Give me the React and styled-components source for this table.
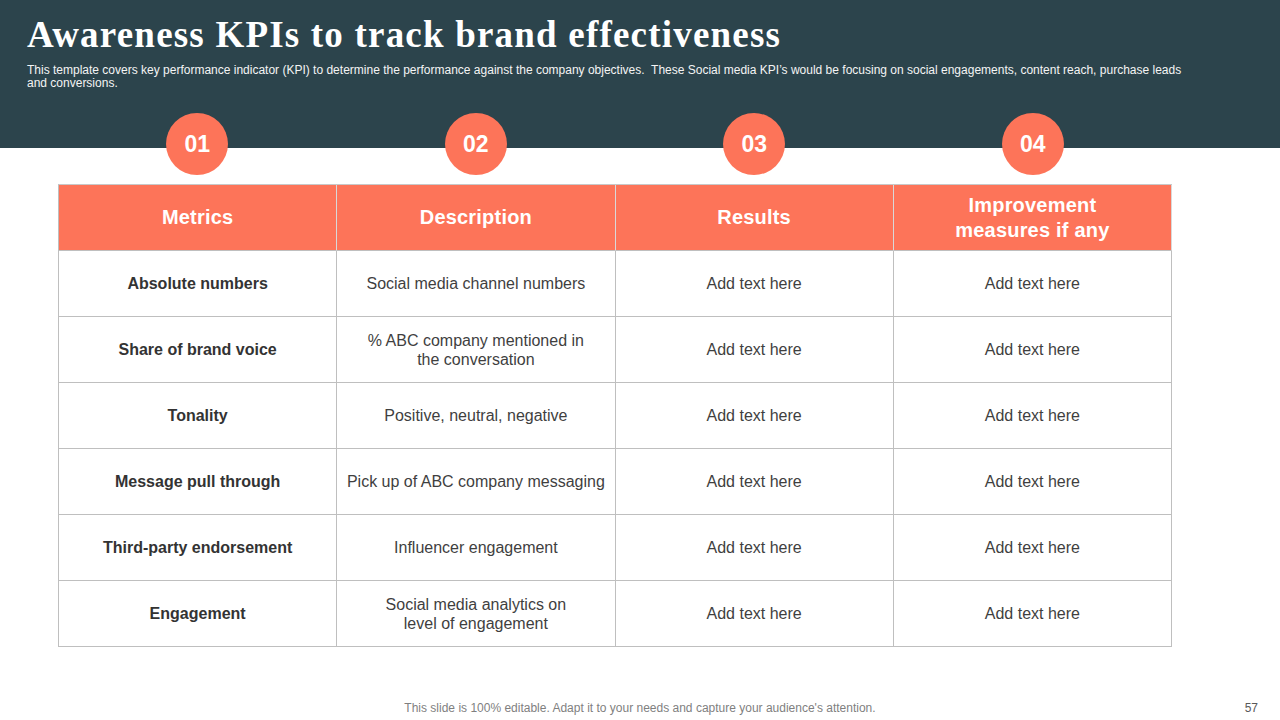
import React from "react";
import styled, { createGlobalStyle } from "styled-components";

const Global = createGlobalStyle`
  html, body { margin: 0; padding: 0; background: #ffffff; }
  * { box-sizing: border-box; }
`;

const Page = styled.div`
  width: 1280px;
  height: 720px;
  overflow: hidden;
  display: flex;
  flex-direction: column;
  background: #ffffff;
  font-family: "Liberation Sans", Arial, sans-serif;
`;

const Header = styled.header`
  height: 148px;
  background: #2c444c;
  padding: 14px 0 0 27px;
  flex-shrink: 0;
`;

const Title = styled.h1`
  margin: 0;
  font-family: "Liberation Serif", "Times New Roman", serif;
  font-weight: 700;
  font-size: 37px;
  line-height: 42px;
  color: #ffffff;
  letter-spacing: 1.2px;
`;

const Subtitle = styled.p`
  margin: 8px 0 0;
  max-width: 1168px;
  font-size: 12px;
  line-height: 13px;
  color: #f4f4f4;
`;

const Main = styled.main`
  margin: -35px 0 0 58px;
  width: 1114px;
  display: flex;
  flex-direction: column;
  gap: 9px;
`;

const BadgeRow = styled.div`
  display: grid;
  grid-template-columns: repeat(4, 1fr);
  justify-items: center;
  position: relative;
`;

const Badge = styled.div`
  width: 62px;
  height: 62px;
  border-radius: 50%;
  background: #fd7459;
  color: #ffffff;
  font-weight: 700;
  font-size: 23px;
  display: flex;
  align-items: center;
  justify-content: center;
`;

const Table = styled.div`
  display: grid;
  grid-template-columns: repeat(4, 1fr);
  border-top: 1px solid #c8c8c8;
  border-left: 1px solid #bfbfbf;
`;

const HeadCell = styled.div`
  height: 66px;
  background: #fd7459;
  color: #ffffff;
  font-weight: 700;
  font-size: 20px;
  line-height: 25px;
  letter-spacing: 0.2px;
  display: flex;
  align-items: center;
  justify-content: center;
  text-align: center;
  border-right: 1px solid #d9d9d9;
  border-bottom: 1px solid #bfbfbf;
`;

const Cell = styled.div`
  height: 66px;
  display: flex;
  align-items: center;
  justify-content: center;
  text-align: center;
  padding: 0 8px;
  font-size: 16px;
  line-height: 19px;
  font-weight: ${(p) => (p.$bold ? 700 : 400)};
  color: ${(p) => (p.$bold ? "#333333" : "#3f3f3f")};
  border-right: 1px solid #bfbfbf;
  border-bottom: 1px solid #bfbfbf;
`;

const Footer = styled.footer`
  margin-top: auto;
  height: 24px;
  display: grid;
  grid-template-columns: 1fr auto 1fr;
  align-items: center;
  font-size: 12px;
  color: #7f7f7f;
`;

const FooterText = styled.span`
  grid-column: 2;
`;

const PageNum = styled.span`
  grid-column: 3;
  justify-self: end;
  padding-right: 22px;
  font-size: 12px;
  color: #595959;
`;

const headers = ["Metrics", "Description", "Results", <>Improvement<br />measures if any</>];

const rows = [
  ["Absolute numbers", "Social media channel numbers"],
  ["Share of brand voice", <>% ABC company mentioned in<br />the conversation</>],
  ["Tonality", "Positive, neutral, negative"],
  ["Message pull through", "Pick up of ABC company messaging"],
  ["Third-party endorsement", "Influencer  engagement"],
  ["Engagement", <>Social media analytics on<br />level of engagement</>],
];

export default function App() {
  return (
    <>
      <Global />
      <Page>
        <Header>
          <Title>Awareness KPIs to track brand effectiveness</Title>
          <Subtitle>
            This template covers key performance indicator (KPI) to determine the performance against the company objectives.&nbsp; These Social media KPI’s would be focusing on social engagements, content reach, purchase leads and conversions.
          </Subtitle>
        </Header>
        <Main>
          <BadgeRow>
            {["01", "02", "03", "04"].map((n) => (
              <Badge key={n}>{n}</Badge>
            ))}
          </BadgeRow>
          <Table>
            {headers.map((h, i) => (
              <HeadCell key={i}>{h}</HeadCell>
            ))}
            {rows.map((r, i) => (
              <React.Fragment key={i}>
                <Cell $bold>{r[0]}</Cell>
                <Cell>{r[1]}</Cell>
                <Cell>Add text here</Cell>
                <Cell>Add text here</Cell>
              </React.Fragment>
            ))}
          </Table>
        </Main>
        <Footer>
          <FooterText>This slide is 100% editable. Adapt it to your needs and capture your audience's attention.</FooterText>
          <PageNum>57</PageNum>
        </Footer>
      </Page>
    </>
  );
}
